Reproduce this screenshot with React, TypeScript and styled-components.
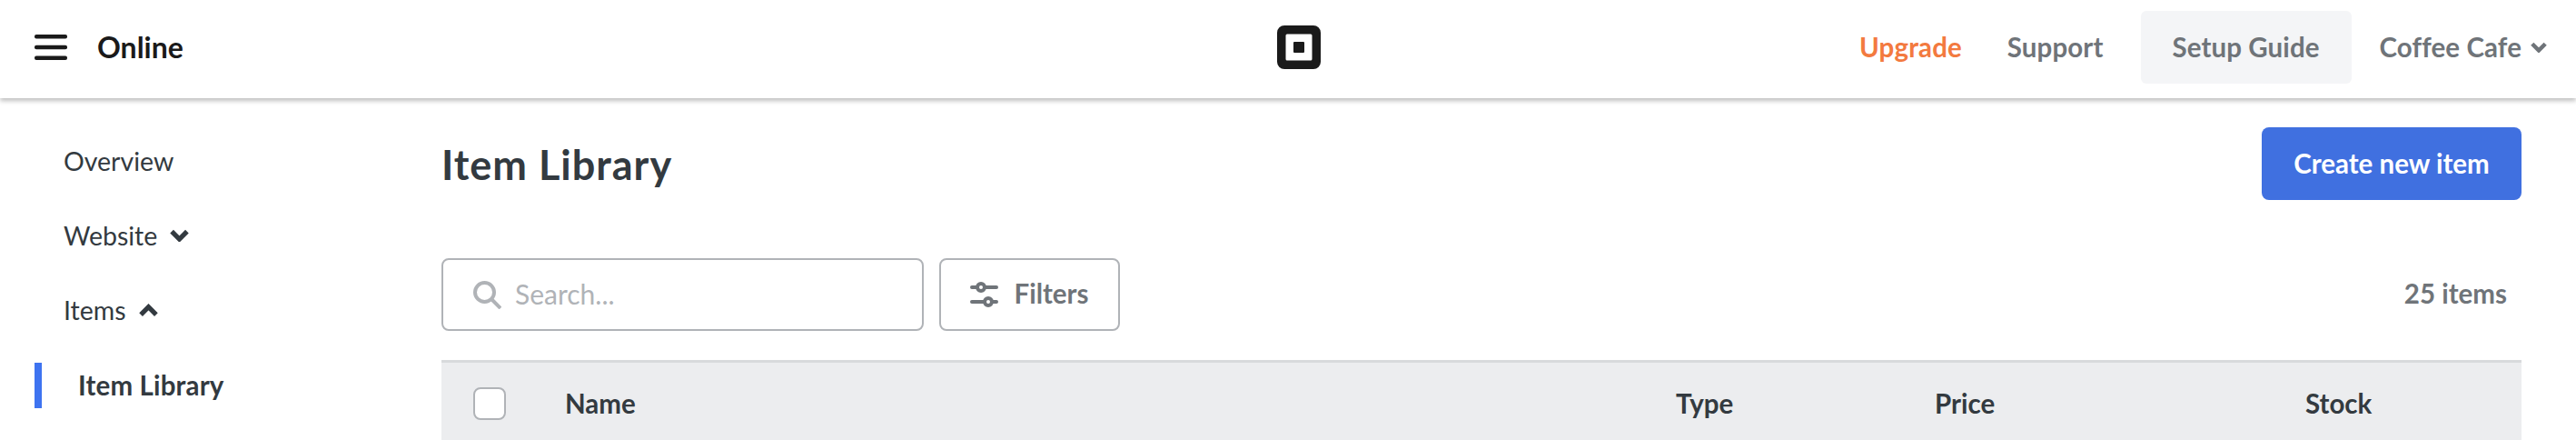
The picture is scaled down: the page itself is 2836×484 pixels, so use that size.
import React from 'react';
import styled, { createGlobalStyle } from 'styled-components';

const GlobalStyle = createGlobalStyle`
  html, body {
    margin: 0;
    height: 484px;
    overflow: hidden;
    background: #fff;
  }
  * {
    box-sizing: border-box;
  }
`;

const Page = styled.div`
  height: 484px;
  overflow: hidden;
  font-family: 'Lato', 'Liberation Sans', sans-serif;
  font-size: 28.5px;
  color: #333a40;
`;

const TopBar = styled.header`
  position: relative;
  z-index: 1;
  height: 108px;
  display: grid;
  grid-template-columns: 1368px 48px 1fr;
  align-items: center;
  padding: 0 32px 4px 38px;
  background: #fff;
  box-shadow: 0 3px 5px rgba(0, 0, 0, 0.25);
`;

const BarLeft = styled.div`
  display: flex;
  align-items: center;
  gap: 33px;
`;

const AppName = styled.span`
  padding-bottom: 2px;
  font-size: 32px;
  font-weight: 700;
  color: #1a1a1a;
`;

const BarRight = styled.nav`
  display: flex;
  align-items: center;
  justify-content: flex-end;
  font-size: 29.5px;
  letter-spacing: 0.1px;
`;

const NavLink = styled.span<{ $tone?: string; $gap: number }>`
  padding-bottom: 2px;
  font-weight: 700;
  color: ${({ $tone }) => $tone || '#6f7479'};
  margin-right: ${({ $gap }) => $gap}px;
`;

const GuideButton = styled.span`
  width: 232px;
  height: 80px;
  display: flex;
  align-items: center;
  justify-content: center;
  margin-right: 31px;
  padding-bottom: 2px;
  border-radius: 6px;
  background: #f4f5f7;
  font-weight: 700;
  color: #6f7479;
`;

const Account = styled.span`
  display: flex;
  align-items: center;
  gap: 10px;
  font-weight: 700;
  color: #6f7479;
`;

const AccountName = styled.span`
  padding-bottom: 2px;
`;

const Content = styled.div`
  display: flex;
`;

const Sidebar = styled.aside`
  width: 486px;
  flex: none;
  padding-top: 29px;
`;

const SideItem = styled.div<{ $active?: boolean }>`
  height: 82px;
  display: flex;
  align-items: center;
  gap: 14px;
  padding: 0 0 2px 70px;
  ${({ $active }) =>
    $active &&
    `
    position: relative;
    padding-left: 86px;
    font-size: 29.5px;
    letter-spacing: 0.15px;
    font-weight: 700;
    &::before {
      content: '';
      position: absolute;
      left: 38px;
      top: 16px;
      width: 8px;
      height: 50px;
      background: #3e73f0;
    }
  `}
`;

const Main = styled.main`
  flex: 1;
  min-width: 0;
  padding: 32px 60px 0 0;
`;

const TitleRow = styled.div`
  height: 80px;
  display: flex;
  align-items: center;
  justify-content: space-between;
`;

const Title = styled.h1`
  margin: 0;
  padding-top: 2px;
  font-size: 45px;
  font-weight: 700;
  letter-spacing: 1px;
  line-height: 1;
`;

const CreateButton = styled.button`
  width: 286px;
  height: 80px;
  padding: 0 0 2px;
  border: 0;
  border-radius: 8px;
  background: #4070e0;
  color: #fff;
  font: 700 29.5px 'Lato', 'Liberation Sans', sans-serif;
`;

const Toolbar = styled.div`
  height: 80px;
  margin-top: 64px;
  display: flex;
  align-items: center;
  gap: 17px;
`;

const SearchBox = styled.div`
  width: 531px;
  height: 80px;
  display: flex;
  align-items: center;
  gap: 15px;
  padding: 0 33px;
  border: 2px solid #b0b3b7;
  border-radius: 8px;
  color: #b0b3b7;
  font-size: 30px;
`;

const FilterButton = styled.div`
  width: 199px;
  height: 80px;
  display: flex;
  align-items: center;
  justify-content: center;
  gap: 17px;
  border: 2px solid #b0b3b7;
  border-radius: 8px;
  font-size: 29.5px;
  font-weight: 700;
  color: #6f7479;
`;

const ControlLabel = styled.span`
  padding-bottom: 3px;
`;

const ItemCount = styled.span`
  margin-left: auto;
  margin-right: 16px;
  padding-bottom: 3px;
  font-size: 29.5px;
  font-weight: 700;
  color: #6f7479;
`;

const TableHead = styled.div`
  height: 100px;
  margin-top: 32px;
  padding: 27px 0 0 35px;
  display: grid;
  grid-template-columns: 101px 1223px 285px 408px 1fr;
  align-items: center;
  align-content: start;
  border-top: 3px solid #d8dadc;
  background: #ecedef;
  font-size: 29.5px;
  font-weight: 700;
`;

const HeadCell = styled.span`
  line-height: 36px;
`;

const CheckBox = styled.span`
  width: 36px;
  height: 36px;
  border: 2px solid #b0b3b7;
  border-radius: 8px;
  background: #fff;
`;

const Hamburger = () => (
  <svg width="36" height="28" viewBox="0 0 36 28" fill="#1a1a1a">
    <rect width="36" height="4.5" y="0" rx="2" />
    <rect width="36" height="4.5" y="11.75" rx="2" />
    <rect width="36" height="4.5" y="23.5" rx="2" />
  </svg>
);

const SquareLogo = () => (
  <svg width="48" height="48" viewBox="0 0 48 48">
    <path
      fillRule="evenodd"
      fill="#1a1a1a"
      d="M8 0h32a8 8 0 0 1 8 8v32a8 8 0 0 1-8 8H8a8 8 0 0 1-8-8V8a8 8 0 0 1 8-8zM11 9.500a1.500 1.500 0 0 0-1.500 1.500v26a1.500 1.500 0 0 0 1.500 1.500h26a1.500 1.500 0 0 0 1.500-1.500V11a1.500 1.500 0 0 0-1.500-1.500zM19 18h10a1 1 0 0 1 1 1v10a1 1 0 0 1-1 1H19a1 1 0 0 1-1-1V19a1 1 0 0 1 1-1z"
    />
  </svg>
);

const Chevron = ({ up, color, width = 21 }: { up?: boolean; color: string; width?: number }) => (
  <svg width={width} height={(width * 14) / 20} viewBox="0 0 20 14" fill="none">
    <path
      d={up ? 'M2 11.500l8-8 8 8' : 'M2 2.500l8 8 8-8'}
      stroke={color}
      strokeWidth="5"
    />
  </svg>
);

const SearchIcon = () => (
  <svg width="31" height="31" viewBox="0 0 31 31" fill="none" stroke="#b0b3b7" strokeWidth="4">
    <circle cx="12.500" cy="12.500" r="10.500" />
    <path d="M20 20l10 10" />
  </svg>
);

const SlidersIcon = () => (
  <svg width="31" height="28" viewBox="0 0 31 28" fill="none" stroke="#6f7479" strokeWidth="4">
    <path d="M2 6h27M2 22h27" strokeLinecap="round" />
    <circle cx="12" cy="6" r="4" fill="#fff" />
    <circle cx="20" cy="22" r="4" fill="#fff" />
  </svg>
);

const App: React.FC = () => (
  <Page>
    <GlobalStyle />
    <TopBar>
      <BarLeft>
        <Hamburger />
        <AppName>Online</AppName>
      </BarLeft>
      <SquareLogo />
      <BarRight>
        <NavLink $tone="#f37a3f" $gap={50}>
          Upgrade
        </NavLink>
        <NavLink $gap={41}>Support</NavLink>
        <GuideButton>Setup Guide</GuideButton>
        <Account>
          <AccountName>Coffee Cafe</AccountName>
          <Chevron color="#6f7479" width={18} />
        </Account>
      </BarRight>
    </TopBar>
    <Content>
      <Sidebar>
        <SideItem>Overview</SideItem>
        <SideItem>
          Website
          <Chevron color="#333a40" />
        </SideItem>
        <SideItem>
          Items
          <Chevron up color="#333a40" />
        </SideItem>
        <SideItem $active>Item Library</SideItem>
      </Sidebar>
      <Main>
        <TitleRow>
          <Title>Item Library</Title>
          <CreateButton>Create new item</CreateButton>
        </TitleRow>
        <Toolbar>
          <SearchBox>
            <SearchIcon />
            <ControlLabel>Search...</ControlLabel>
          </SearchBox>
          <FilterButton>
            <SlidersIcon />
            <ControlLabel>Filters</ControlLabel>
          </FilterButton>
          <ItemCount>25 items</ItemCount>
        </Toolbar>
        <TableHead>
          <CheckBox />
          <HeadCell>Name</HeadCell>
          <HeadCell>Type</HeadCell>
          <HeadCell>Price</HeadCell>
          <HeadCell>Stock</HeadCell>
        </TableHead>
      </Main>
    </Content>
  </Page>
);

export default App;
